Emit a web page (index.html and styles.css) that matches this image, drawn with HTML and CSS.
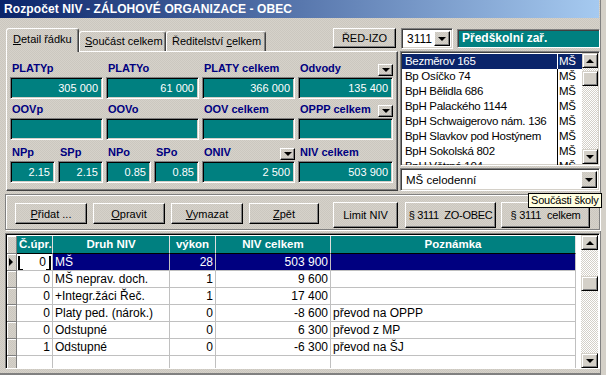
FILE: index.html
```html
<html>
<head>
<meta name="viewport" content="width=device-width, initial-scale=1">
<link rel="stylesheet" href="styles.css">
</head>
<body>
	<div class="window">
		<div class="titlebar">Rozpočet NIV - ZÁLOHOVÉ ORGANIZACE - OBEC</div>

		<div class="top">
			<div class="left">
				<div class="tabrow">
					<div class="tab active"><u>D</u>etail řádku</div>
					<div class="tab tab2"><u>S</u>oučást celkem</div>
					<div class="tab tab3">Ředitelství <u>c</u>elkem</div>
					<button class="btn red-izo">ŘED-IZO</button>
				</div>
				<div class="panel">
					<div class="fields">
						<div class="field span2"><div class="lbl">PLATYp</div><div class="val">305 000</div></div>
						<div class="field span2"><div class="lbl">PLATYo</div><div class="val">61 000</div></div>
						<div class="field"><div class="lbl">PLATY celkem</div><div class="val">366 000</div></div>
						<div class="field"><div class="lbl">Odvody<span class="dd"></span></div><div class="val">135 400</div></div>

						<div class="field span2"><div class="lbl">OOVp</div><div class="val"></div></div>
						<div class="field span2"><div class="lbl">OOVo</div><div class="val"></div></div>
						<div class="field"><div class="lbl">OOV celkem</div><div class="val"></div></div>
						<div class="field"><div class="lbl">OPPP celkem<span class="dd"></span></div><div class="val"></div></div>

						<div class="field row3"><div class="lbl">NPp</div><div class="val">2.15</div></div>
						<div class="field row3"><div class="lbl">SPp</div><div class="val">2.15</div></div>
						<div class="field row3"><div class="lbl">NPo</div><div class="val">0.85</div></div>
						<div class="field row3"><div class="lbl">SPo</div><div class="val">0.85</div></div>
						<div class="field row3"><div class="lbl">ONIV<span class="dd"></span></div><div class="val">2 500</div></div>
						<div class="field row3"><div class="lbl">NIV celkem</div><div class="val">503 900</div></div>
					</div>
				</div>
			</div>

			<div class="right">
				<div class="selrow">
					<div class="combo combo-small"><span class="combo-text">3111</span><span class="dd-btn"></span></div>
					<div class="section-name">Předškolní zař.</div>
				</div>
				<div class="listbox">
					<div class="list-items">
						<div class="item selected"><span class="name">Bezměrov 165</span><span class="kind">MŠ</span></div>
						<div class="item"><span class="name">Bp Osíčko 74</span><span class="kind">MŠ</span></div>
						<div class="item"><span class="name">BpH Bělidla 686</span><span class="kind">MŠ</span></div>
						<div class="item"><span class="name">BpH Palackého 1144</span><span class="kind">MŠ</span></div>
						<div class="item"><span class="name">BpH Schwaigerovo nám. 136</span><span class="kind">MŠ</span></div>
						<div class="item"><span class="name">BpH Slavkov pod Hostýnem</span><span class="kind">MŠ</span></div>
						<div class="item"><span class="name">BpH Sokolská 802</span><span class="kind">MŠ</span></div>
						<div class="item"><span class="name">BpH Větrná 104</span><span class="kind">MŠ</span></div>
					</div>
					<div class="vscroll">
						<span class="sb-btn up"></span>
						<span class="sb-thumb list-thumb"></span>
						<span class="sb-fill"></span>
						<span class="sb-btn down"></span>
					</div>
				</div>
				<div class="combo combo-wide"><span class="combo-text">MŠ celodenní</span><span class="dd-btn"></span></div>
			</div>
		</div>

		<div class="btnbar">
			<button class="btn small"><u>P</u>řidat ...</button>
			<button class="btn small"><u>O</u>pravit</button>
			<button class="btn small"><u>V</u>ymazat</button>
			<button class="btn small zpet"><u>Z</u>pět</button>
			<button class="btn tall limit">Limit NIV</button>
			<button class="btn tall zo">§ 3111&nbsp; ZO-OBEC</button>
			<button class="btn tall total">§ 3111&nbsp; celkem</button>
		</div>

		<div class="grid">
			<div class="grid-body">
				<div class="grow head">
					<div class="sel"></div>
					<div class="c">Č.úpr.</div>
					<div class="c">Druh NIV</div>
					<div class="c">výkon</div>
					<div class="c">NIV celkem</div>
					<div class="c">Poznámka</div>
				</div>
				<div class="grow current">
					<div class="sel"><span class="pointer"></span></div>
					<div class="c num focus">0</div>
					<div class="c">MŠ</div>
					<div class="c num">28</div>
					<div class="c num">503 900</div>
					<div class="c"></div>
				</div>
				<div class="grow">
					<div class="sel"></div>
					<div class="c num">0</div>
					<div class="c">MŠ neprav. doch.</div>
					<div class="c num">1</div>
					<div class="c num">9 600</div>
					<div class="c"></div>
				</div>
				<div class="grow">
					<div class="sel"></div>
					<div class="c num">0</div>
					<div class="c">+Integr.žáci Řeč.</div>
					<div class="c num">1</div>
					<div class="c num">17 400</div>
					<div class="c"></div>
				</div>
				<div class="grow">
					<div class="sel"></div>
					<div class="c num">0</div>
					<div class="c">Platy ped. (nárok.)</div>
					<div class="c num">0</div>
					<div class="c num">-8 600</div>
					<div class="c">převod na OPPP</div>
				</div>
				<div class="grow">
					<div class="sel"></div>
					<div class="c num">0</div>
					<div class="c">Odstupné</div>
					<div class="c num">0</div>
					<div class="c num">6 300</div>
					<div class="c">převod z MP</div>
				</div>
				<div class="grow">
					<div class="sel"></div>
					<div class="c num">1</div>
					<div class="c">Odstupné</div>
					<div class="c num">0</div>
					<div class="c num">-6 300</div>
					<div class="c">převod na ŠJ</div>
				</div>
				<div class="grow">
					<div class="sel"></div>
					<div class="c"></div>
					<div class="c"></div>
					<div class="c"></div>
					<div class="c"></div>
					<div class="c"></div>
				</div>
			</div>
			<div class="vscroll grid-scroll">
				<span class="sb-btn up"></span>
				<span class="sb-fill short"></span>
				<span class="sb-thumb"></span>
				<span class="sb-fill"></span>
				<span class="sb-btn down"></span>
			</div>
		</div>

		<div class="tooltip">Součásti školy</div>
	</div>
</body>
</html>
```

FILE: styles.css
```css
:root {
	--face: repeating-conic-gradient(#d6d2ca 0 25%, #cbc7bf 0 50%) 0 0 / 2px 2px;
	--track: repeating-conic-gradient(#ffffff 0 25%, #d4d0c8 0 50%) 0 0 / 2px 2px;
}
* {
	box-sizing: border-box;
}
body {
	margin: 0;
	font-family: "Liberation Sans", Arial, sans-serif;
	font-size: 11px;
	color: #000;
}
u {
	text-decoration: underline;
	text-underline-offset: 1px;
}
.window {
	position: relative;
	width: 606px;
	height: 375px;
	overflow: hidden;
	background: var(--face);
	box-shadow: inset -5px 0 0 #d4d0c8, inset -6px 0 0 #808080, inset 0 -2px 0 #808080;
}

/* title */
.titlebar {
	width: 599px;
	height: 18px;
	padding-left: 4px;
	line-height: 19px;
	color: #fff;
	font-weight: bold;
	font-size: 12px;
	letter-spacing: 0.1px;
	background: linear-gradient(to right, #0a246a, #a6caf0);
}

/* raised / sunken */
.btn {
	background: var(--face);
	border: 1px solid;
	border-color: #fff #000 #000 #fff;
	box-shadow: inset -1px -1px 0 #808080;
	font-family: "Liberation Sans", Arial, sans-serif;
	font-size: 11px;
	color: #000;
	padding: 0;
	white-space: nowrap;
}

.top {
	display: flex;
	padding-top: 10px;
	height: 174px;
}
.left {
	margin-left: 6px;
	width: 392px;
}
.tabrow {
	display: flex;
	align-items: flex-end;
	height: 23px;
}
.tab {
	height: 20px;
	border: 1px solid;
	border-bottom: 0;
	border-color: #fff #404040 transparent #fff;
	box-shadow: inset -1px 0 0 #808080;
	border-radius: 3px 3px 0 0;
	background: var(--face);
	line-height: 19px;
	padding-left: 5px;
	font-size: 11px;
	white-space: nowrap;
}
.tab.active {
	position: relative;
	z-index: 1;
	width: 73px;
	height: 24px;
	margin-bottom: -1px;
	padding-left: 6px;
	line-height: 20px;
}
.tab2 {
	width: 87px;
}
.tab3 {
	width: 100px;
}
.red-izo {
	align-self: flex-start;
	margin-left: auto;
	margin-right: 2px;
	width: 63px;
	height: 20px;
}
.panel {
	height: 140px;
	border: 1px solid;
	border-color: #fff #404040 #404040 #fff;
	box-shadow: inset -1px -1px 0 #808080;
	padding: 6px 0 0 3px;
}
.fields {
	display: grid;
	grid-template-columns: 45px 45px 45px 45px 93px 95px;
	column-gap: 3px;
}
.span2 {
	grid-column: span 2;
}
.lbl {
	display: flex;
	justify-content: space-between;
	align-items: flex-end;
	height: 19px;
	padding: 0 0 2px 2px;
	color: #000080;
	font-weight: bold;
	font-size: 11px;
	line-height: 13px;
}
.row3 .lbl {
	height: 21px;
}
.dd {
	width: 15px;
	height: 12px;
	display: flex;
	align-items: center;
	justify-content: center;
	margin-bottom: -1px;
	background: var(--face);
	border: 1px solid;
	border-color: #fff #000 #000 #fff;
	box-shadow: inset -1px -1px 0 #808080;
}
.dd::before,
.dd-btn::before,
.sb-btn::before {
	content: "";
	border-left: 4px solid transparent;
	border-right: 4px solid transparent;
	border-top: 4px solid #000;
}
.val {
	height: 22px;
	background: #008080;
	border: 1px solid;
	border-color: #808080 #fff #fff #808080;
	box-shadow: inset 1px 1px 0 #000, inset -1px -1px 0 #d4d0c8;
	color: #fff;
	text-align: right;
	padding-right: 4px;
	line-height: 20px;
}

/* right column */
.right {
	margin-left: 2px;
	width: 200px;
	display: flex;
	flex-direction: column;
}
.selrow {
	display: flex;
	height: 21px;
}
.combo {
	display: flex;
	align-items: center;
	background: #fff;
	border: 1px solid;
	border-color: #808080 #fff #fff #808080;
	box-shadow: inset 1px 1px 0 #404040, inset -1px -1px 0 #d4d0c8;
	padding: 2px;
	font-size: 12px;
}
.combo-text {
	flex: 1;
	padding-left: 3px;
}
.combo-small {
	margin-left: 1px;
	width: 52px;
}
.dd-btn {
	width: 16px;
	height: 100%;
	display: flex;
	align-items: center;
	justify-content: center;
	background: var(--face);
	border: 1px solid;
	border-color: #fff #000 #000 #fff;
	box-shadow: inset -1px -1px 0 #808080;
}
.section-name {
	margin: 1px 0 0 4px;
	width: 143px;
	height: 19px;
	background: #008080;
	border: 1px solid;
	border-color: #808080 #fff #fff #808080;
	box-shadow: inset 1px 1px 0 #404040;
	color: #fff;
	font-weight: bold;
	font-size: 12px;
	line-height: 17px;
	padding-left: 4px;
}
.listbox {
	display: flex;
	margin-top: 2px;
	height: 115px;
	background: #fff;
	border: 1px solid;
	border-color: #808080 #fff #fff #808080;
	box-shadow: inset 1px 1px 0 #404040, inset -1px -1px 0 #d4d0c8;
	padding: 1px;
	overflow: hidden;
}
.list-items {
	flex: 1;
	padding-top: 1px;
	font-size: 11.5px;
	letter-spacing: -0.3px;
}
.item {
	display: flex;
	height: 15px;
	line-height: 15px;
}
.item .name {
	width: 155px;
	padding-left: 3px;
	white-space: nowrap;
	overflow: hidden;
}
.item .kind {
	border-left: 1px solid #000;
	padding-left: 1px;
}
.item.selected {
	background: #0a246a;
	color: #fff;
}
.item.selected .kind {
	border-left-color: #fff;
}
.vscroll {
	width: 16px;
	display: flex;
	flex-direction: column;
	background: var(--track);
}
.sb-btn,
.sb-thumb {
	height: 15px;
	display: flex;
	align-items: center;
	justify-content: center;
	background: #d4d0c8;
	border: 1px solid;
	border-color: #d4d0c8 #000 #000 #d4d0c8;
	box-shadow: inset 1px 1px 0 #fff, inset -1px -1px 0 #808080;
}
.sb-btn.up::before {
	border-top: 0;
	border-bottom: 4px solid #000;
}
.list-thumb {
	margin-top: 3px;
}
.sb-fill {
	flex: 1;
}
.sb-fill.short {
	flex: 0 0 26px;
}
.combo-wide {
	margin-top: 2px;
	height: 23px;
	font-size: 11.5px;
}

/* buttons */
.btnbar {
	display: flex;
	align-items: flex-start;
	margin: 2px 6px 0 5px;
	height: 36px;
	border: 1px solid #808080;
	box-shadow: inset 1px 1px 0 #fff, 1px 1px 0 #fff;
	padding: 7px 0 0 9px;
}
.btn.small {
	width: 72px;
	height: 21px;
	margin: 1px 6px 0 0;
}
.btn.zpet {
	width: 70px;
	margin-right: 0;
}
.btn.tall {
	height: 26px;
}
.limit {
	width: 65px;
	margin-left: 14px;
}
.zo {
	width: 91px;
	margin-left: 7px;
	letter-spacing: -0.3px;
}
.total {
	width: 89px;
	margin-left: 5px;
	letter-spacing: -0.2px;
}

/* grid */
.grid {
	display: flex;
	margin: 3px 6px 0 5px;
	height: 136px;
	background: #fff;
	border: 1px solid;
	border-color: #808080 #fff #fff #808080;
	box-shadow: inset 1px 1px 0 #000;
	padding: 1px 0 0 1px;
	overflow: hidden;
}
.grid-body {
	flex: 1;
	padding-top: 1px;
	font-size: 12px;
}
.grow {
	display: grid;
	grid-template-columns: 10px 36px 117px 46px 115px 245px;
	height: 17px;
}
.grow .c {
	border-right: 1px solid #c0c0c0;
	border-bottom: 1px solid #c0c0c0;
	padding: 0 2px;
	line-height: 16px;
	white-space: nowrap;
	overflow: hidden;
}
.grow .num {
	text-align: right;
}
.sel {
	background: var(--face);
	border-right: 1px solid #808080;
	border-bottom: 1px solid #808080;
	box-shadow: inset 1px 1px 0 #fff;
	display: flex;
	align-items: center;
}
.grow.head {
	height: 18px;
}
.head .c {
	background: #008080;
	color: #fff;
	font-weight: bold;
	font-size: 11.5px;
	text-align: center;
	line-height: 17px;
	border-right-color: #dfdfdf;
	border-bottom-color: #000;
}
.current .c {
	background: #000080;
	color: #fff;
}
.current .c.focus {
	position: relative;
	background: #fff;
	color: #000;
	padding-right: 6px;
}
.focus::before,
.focus::after {
	content: "";
	position: absolute;
	top: 2px;
	width: 3px;
	height: 13px;
	border-bottom: 2px solid #000;
}
.focus::before {
	left: 1px;
	border-left: 2px solid #000;
}
.focus::after {
	right: 1px;
	border-right: 2px solid #000;
}
.pointer {
	margin-left: 2px;
	border-top: 4px solid transparent;
	border-bottom: 4px solid transparent;
	border-left: 4px solid #000;
}
.grid-scroll {
	width: 17px;
	margin-right: 1px;
}

.tooltip {
	position: absolute;
	left: 528px;
	top: 193px;
	height: 15px;
	padding: 0 2px;
	background: #ffffe1;
	border: 1px solid #000;
	line-height: 13px;
	font-size: 11px;
	letter-spacing: -0.2px;
	white-space: nowrap;
}
```
